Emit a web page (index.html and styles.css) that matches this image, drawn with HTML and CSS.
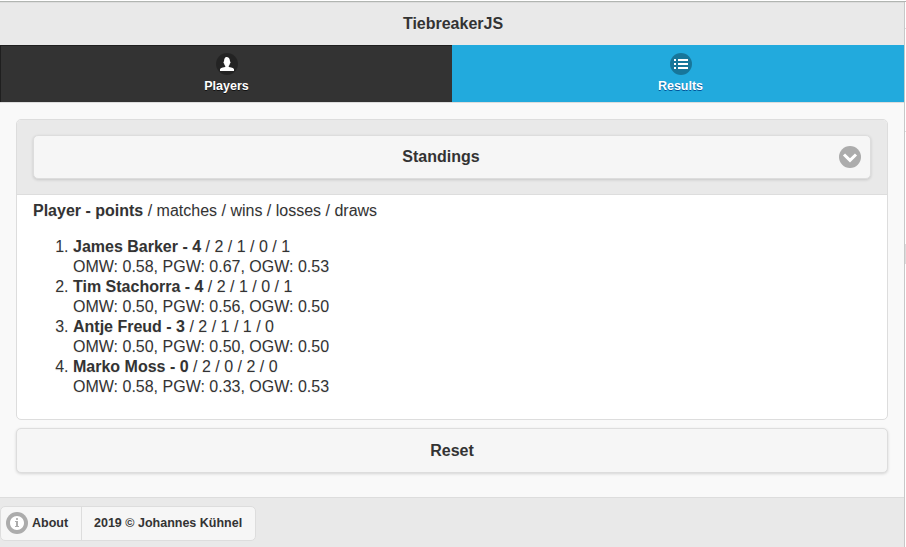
FILE: index.html
```html
<!DOCTYPE html>
<html lang="en">
<head>
<meta charset="utf-8">
<title>TiebreakerJS</title>
<link rel="stylesheet" href="styles.css">
</head>
<body>
<div class="window">
  <div class="page">
    <header class="header"><h1>TiebreakerJS</h1></header>
    <nav class="navbar">
      <a class="tab">
        <span class="disc"><svg width="14" height="14" viewBox="0 0 14 14"><path d="M8.851,10.101c-0.18-0.399-0.2-0.763-0.153-1.104C9.383,8.49,9.738,7.621,9.891,6.465C10.493,6.355,10.5,5.967,10.5,5.5c0-0.437-0.008-0.804-0.502-0.94C9.999,4.539,10,4.521,10,4.5c0-2.103-1-4-2-4C8,0.5,7.5,0,6.5,0C5,0,4,1.877,4,4.5c0,0.021,0.001,0.039,0.002,0.06C3.508,4.696,3.5,5.063,3.5,5.5c0,0.467,0.007,0.855,0.609,0.965C4.262,7.621,4.617,8.49,5.303,8.997c0.047,0.341,0.026,0.704-0.153,1.104C1.503,10.503,0,12,0,12v2h14v-2C14,12,12.497,10.503,8.851,10.101z"/></svg></span>
        <span>Players</span>
      </a>
      <a class="tab active">
        <span class="disc"><svg width="14" height="14" viewBox="0 0 14 14"><path d="M0,2h2v2H0z M4,2h10v2H4z M0,6h2v2H0z M4,6h10v2H4z M0,10h2v2H0z M4,10h10v2H4z"/></svg></span>
        <span>Results</span>
      </a>
    </nav>
    <main class="content">
      <section class="card">
        <div class="card-head">
          <div class="button toggle">Standings
            <span class="disc carat"><svg width="14" height="14" viewBox="0 0 14 14"><path d="M11.949,3.404L7,8.354L2.05,3.404L-0.071,5.525L7,12.597L14.07,5.525z"/></svg></span>
          </div>
        </div>
        <div class="card-body">
          <div><b>Player - points</b> / matches / wins / losses / draws</div>
          <ol>
            <li><b>James Barker - 4</b> / 2 / 1 / 0 / 1<br>OMW: 0.58, PGW: 0.67, OGW: 0.53</li>
            <li><b>Tim Stachorra - 4</b> / 2 / 1 / 0 / 1<br>OMW: 0.50, PGW: 0.56, OGW: 0.50</li>
            <li><b>Antje Freud - 3</b> / 2 / 1 / 1 / 0<br>OMW: 0.50, PGW: 0.50, OGW: 0.50</li>
            <li><b>Marko Moss - 0</b> / 2 / 0 / 2 / 0<br>OMW: 0.58, PGW: 0.33, OGW: 0.53</li>
          </ol>
        </div>
      </section>
      <div class="button reset">Reset</div>
    </main>
    <footer class="footer">
      <div class="group">
        <a class="about"><span class="disc"><svg width="14" height="14" viewBox="0 0 14 14"><path d="M7,0C3.134,0,0,3.134,0,7s3.134,7,7,7s7-3.134,7-7S10.866,0,7,0z M7,2c0.552,0,1,0.447,1,1S7.552,4,7,4S6,3.553,6,3S6.448,2,7,2z M9,11H5v-1h1V6H5V5h3v5h1V11z"/></svg></span>About</a>
        <a class="copyright">2019 © Johannes Kühnel</a>
      </div>
    </footer>
  </div>
  <div class="gutter"></div>
</div>
</body>
</html>
```
FILE: styles.css
```css
* {
  box-sizing: border-box;
}

body {
  margin: 0;
  background: #fff;
  color: #333;
  font: 16px/20px "Liberation Sans", Arial, sans-serif;
  text-shadow: 0 1px 0 #f3f3f3;
}

.window {
  display: flex;
  height: 546px;
  margin-top: 1px;
  border-top: 1px solid #b1b5b1;
}

.page {
  display: flex;
  flex-direction: column;
  width: 905px;
  border-right: 1px solid #c8c8c8;
  background: #f9f9f9;
}

.gutter {
  width: 1px;
  background:
    linear-gradient(#ddd, #ddd) 0 26px / 1px 1px no-repeat,
    linear-gradient(#ddd, #ddd) 0 129px / 1px 1px no-repeat,
    linear-gradient(#ddd, #ddd) 0 242px / 1px 20px no-repeat;
}

.header {
  height: 43px;
  border-top: 1px solid #ddd;
  background: #e9e9e9;
}

.header h1 {
  margin: 0;
  padding: 11px 0 0 2px;
  font-size: 16px;
  line-height: 20px;
  text-align: center;
  text-shadow: 0 1px 0 #eee;
}

.navbar {
  display: grid;
  grid-template-columns: 1fr 1fr;
  height: 58px;
  border-bottom: 1px solid #ddd;
}

.tab {
  display: flex;
  flex-direction: column;
  align-items: center;
  gap: 3px;
  padding-top: 7px;
  border: solid #1f1f1f;
  border-width: 1px 0 0 1px;
  background: #333;
  color: #fff;
  font-size: 12.5px;
  font-weight: bold;
  line-height: 16px;
  text-shadow: 0 1px 0 #111;
}

.active {
  padding-left: 4px;
  border-color: #22aadd;
  background: #22aadd;
  text-shadow: 0 1px 0 #005599;
}

.disc {
  display: flex;
  align-items: center;
  justify-content: center;
  width: 22px;
  height: 22px;
  flex: none;
  border-radius: 50%;
  background: rgba(0, 0, 0, 0.3);
}

.disc svg {
  overflow: visible;
  fill: #fff;
}

.content {
  flex: 1;
  padding: 16px;
}

.card {
  height: 301px;
  border: 1px solid #ddd;
  border-radius: 5px;
  background: #fff;
  overflow: hidden;
}

.card-head {
  height: 75px;
  padding: 15px 16px;
  border-bottom: 1px solid #ddd;
  background: #e9e9e9;
}

.button {
  position: relative;
  height: 45px;
  padding: 12px 11px 10px;
  border: 1px solid #ddd;
  border-radius: 5px;
  background: #f6f6f6;
  box-shadow: 0 1px 3px rgba(0, 0, 0, 0.15);
  font-weight: bold;
  text-align: center;
}

.toggle {
  height: 44px;
  padding: 11px 33px 11px 11px;
}

.carat {
  position: absolute;
  top: 50%;
  right: 9px;
  margin-top: -11px;
}

.card-body {
  padding: 6px 16px;
}

.card-body ol {
  margin: 16px 0;
  padding-left: 40px;
}

.reset {
  margin-top: 8px;
}

.footer {
  height: 50px;
  padding-top: 8px;
  border-top: 1px solid #ddd;
  background: #e9e9e9;
}

.group {
  display: flex;
  width: 256px;
  height: 35px;
  border: 1px solid #ddd;
  border-radius: 5px;
  background: #f6f6f6;
  font-size: 12.5px;
  font-weight: bold;
  line-height: 32px;
}

.about {
  display: flex;
  align-items: center;
  gap: 4px;
  width: 81px;
  padding: 0 0 1px 5px;
  border-right: 1px solid #ddd;
}

.copyright {
  padding-left: 12px;
}
```
